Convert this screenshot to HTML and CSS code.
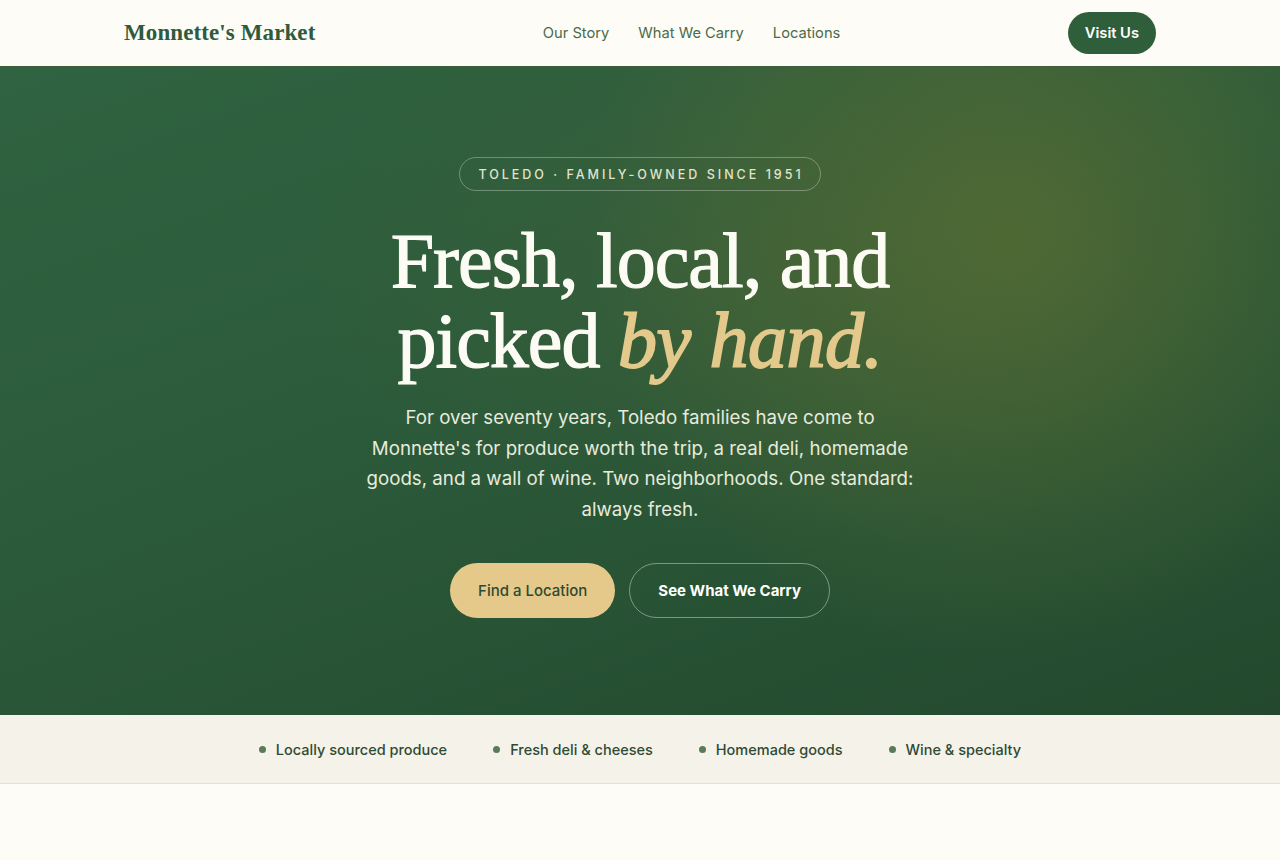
FILE: index.html
```html
<!DOCTYPE html>
<html lang="en">
<head>
    <meta charset="UTF-8">
    <meta name="viewport" content="width=device-width, initial-scale=1.0">
    <title>Monnette's Market</title>
    <link rel="stylesheet" href="styles.css">
</head>
<body>
    <!-- Header -->
    <header class="site-header">
        <div class="wrap header-inner">
            <a href="#" class="logo">Monnette's Market</a>
            <nav class="main-nav">
                <a href="#">Our Story</a>
                <a href="#">What We Carry</a>
                <a href="#">Locations</a>
            </nav>
            <a href="#" class="btn btn-dark">Visit Us</a>
        </div>
    </header>

    <!-- Hero -->
    <section class="hero">
        <div class="hero-inner">
            <span class="eyebrow">Toledo · Family-Owned Since 1951</span>
            <h1>Fresh, local, and<br>picked <em>by hand.</em></h1>
            <p class="lead">For over seventy years, Toledo families have come to Monnette's for produce worth the trip, a real deli, homemade goods, and a wall of wine. Two neighborhoods. One standard: always fresh.</p>
            <div class="hero-actions">
                <a href="#" class="btn btn-gold">Find a Location</a>
                <a href="#" class="btn btn-outline">See What We Carry</a>
            </div>
        </div>
    </section>

    <!-- Highlights -->
    <div class="highlights">
        <ul>
            <li>Locally sourced produce</li>
            <li>Fresh deli &amp; cheeses</li>
            <li>Homemade goods</li>
            <li>Wine &amp; specialty</li>
        </ul>
    </div>

    <main class="page-rest"></main>
</body>
</html>
```

FILE: styles.css
```css
* {
    box-sizing: border-box;
}

body {
    margin: 0;
    font-family: Inter, "Noto Sans", sans-serif;
    background: #fdfcf7;
    color: #2f4a33;
}

a {
    text-decoration: none;
}

.wrap {
    max-width: 1080px;
    margin: 0 auto;
    padding: 0 24px;
}

/* Header */
.site-header {
    background: #fdfcf7;
    border-bottom: 1px solid #3d5c3c;
}

.header-inner {
    height: 66px;
    display: flex;
    align-items: center;
    justify-content: space-between;
}

.logo {
    font-family: "Liberation Serif", "DejaVu Serif", serif;
    font-size: 23px;
    font-weight: 700;
    color: #2f5a3b;
    letter-spacing: 0.1px;
}

.main-nav {
    display: flex;
    gap: 29px;
}

.main-nav a {
    color: #4a6b48;
    font-size: 14.7px;
}

.btn {
    display: inline-flex;
    align-items: center;
    justify-content: center;
    border-radius: 999px;
    font-size: 15px;
    white-space: nowrap;
}

.btn-dark {
    background: #2f5e3b;
    color: #fff;
    font-weight: 600;
    font-size: 14.7px;
    height: 42px;
    padding: 0 17px;
}

/* Hero */
.hero {
    height: 648px;
    background:
        radial-gradient(circle at 79% 26%, rgba(90, 110, 50, 0.72) 0, rgba(90, 110, 50, 0) 38%),
        radial-gradient(ellipse at 62% 30%, rgba(80, 100, 55, 0.35) 0, rgba(80, 100, 55, 0) 45%),
        linear-gradient(160deg, #306341 0%, #2b5a3a 45%, #23482d 100%);
    color: #fdfcf7;
    display: flex;
    justify-content: center;
}

.hero-inner {
    padding-top: 90px;
    width: 580px;
    display: flex;
    flex-direction: column;
    align-items: center;
    text-align: center;
}

.eyebrow {
    display: inline-block;
    border: 1px solid rgba(255, 255, 255, 0.3);
    border-radius: 999px;
    padding: 9px 16px 8px 18px;
    font-size: 12.5px;
    font-weight: 500;
    letter-spacing: 3px;
    text-transform: uppercase;
    color: #e2e3cd;
}

.hero h1 {
    font-family: "Liberation Serif", "DejaVu Serif", serif;
    font-weight: 400;
    font-size: 78px;
    line-height: 80px;
    letter-spacing: -1px;
    margin: 30px 0 22px;
    color: #fdfcf4;
    -webkit-text-stroke: 1.2px #fdfcf4;
}

.hero h1 em {
    color: #e3c98b;
    letter-spacing: -0.5px;
    -webkit-text-stroke: 1.8px #e3c98b;
}

.lead {
    margin: 0;
    font-size: 18.7px;
    line-height: 30.5px;
    color: #e6ebdd;
    width: 560px;
}

.hero-actions {
    display: flex;
    gap: 14px;
    margin-top: 38px;
}

.btn-gold {
    background: #e5c98a;
    color: #2f4a33;
    font-weight: 500;
    height: 55px;
    padding: 0 28px;
}

.btn-outline {
    border: 1px solid rgba(255, 255, 255, 0.4);
    color: #fff;
    font-weight: 700;
    height: 55px;
    padding: 0 28px;
}

/* Highlights strip */
.highlights {
    background: #f5f2ea;
    border-bottom: 1px solid #e4e0d4;
    height: 69px;
    display: flex;
    align-items: center;
    justify-content: center;
}

.highlights ul {
    list-style: none;
    margin: 0;
    padding: 0;
    display: flex;
    gap: 46px;
}

.highlights li {
    display: flex;
    align-items: center;
    gap: 10px;
    font-size: 14.5px;
    font-weight: 500;
    color: #2f4a33;
}

.highlights li::before {
    content: "";
    width: 7px;
    height: 7px;
    border-radius: 50%;
    background: #5b7a58;
}

.page-rest {
    height: 80px;
}
```
